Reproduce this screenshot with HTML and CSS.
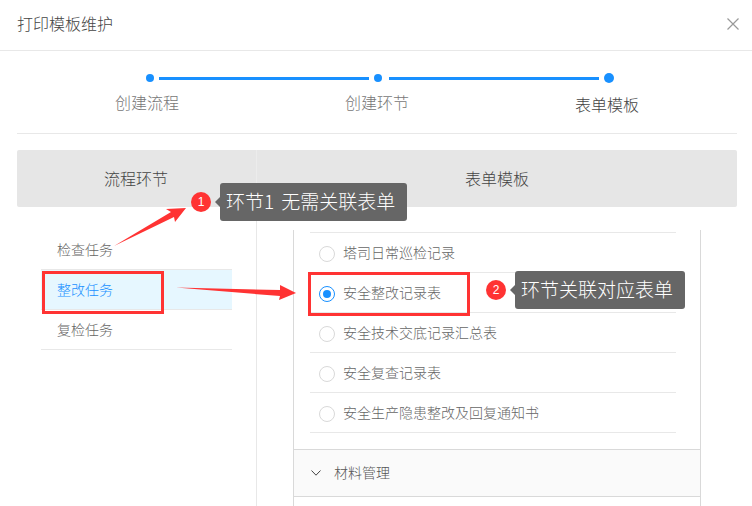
FILE: index.html
```html
<!DOCTYPE html>
<html lang="zh-CN">
<head>
<meta charset="utf-8">
<title>打印模板维护</title>
<link rel="stylesheet" href="styles.css">
</head>
<body>
<div class="dialog">
  <header class="header">
    <span class="title">打印模板维护</span>
    <svg class="close" width="12" height="12" viewBox="0 0 12 12"><path d="M0.5 0.5L11.5 11.5M11.5 0.5L0.5 11.5"/></svg>
  </header>
  <div class="steps">
    <div class="track">
      <i class="dot"></i><i class="line"></i><i class="dot"></i><i class="line"></i><i class="dot dot-big"></i>
    </div>
    <div class="labels">
      <span class="label">创建流程</span>
      <span class="label">创建环节</span>
      <span class="label label-active">表单模板</span>
    </div>
  </div>
  <div class="table">
    <div class="thead">
      <div class="th th-left">流程环节</div>
      <div class="th th-right">表单模板</div>
    </div>
    <div class="tbody">
      <div class="col-left">
        <ul class="flow">
          <li class="flow-item">检查任务</li>
          <li class="flow-item flow-active">整改任务</li>
          <li class="flow-item">复检任务</li>
        </ul>
      </div>
      <div class="col-right">
        <div class="panel">
          <ul class="forms">
            <li class="form"><i class="radio"></i>塔司日常巡检记录</li>
            <li class="form"><i class="radio radio-on"></i>安全整改记录表</li>
            <li class="form"><i class="radio"></i>安全技术交底记录汇总表</li>
            <li class="form"><i class="radio"></i>安全复查记录表</li>
            <li class="form"><i class="radio"></i>安全生产隐患整改及回复通知书</li>
          </ul>
          <div class="group">
            <svg class="chev" width="10" height="6" viewBox="0 0 10 6"><path d="M0.5 0.5L5 5.2L9.5 0.5"/></svg>
            <span>材料管理</span>
          </div>
        </div>
      </div>
    </div>
  </div>
</div>

<svg class="arrows" width="752" height="506" viewBox="0 0 752 506">
  <polygon points="114,246 171,212 166,209 186,208 175,222 174,217"/>
  <polygon points="176,287.5 280,290 280,285 296,293 279,300 280,296"/>
</svg>
<div class="mark mark-a"></div>
<div class="mark mark-b"></div>
<div class="note note-a"><b class="badge">1</b><span class="tip tip-a">环节1 无需关联表单</span></div>
<div class="note note-b"><b class="badge">2</b><span class="tip">环节关联对应表单</span></div>
</body>
</html>
```
FILE: styles.css
```css
* { box-sizing: border-box; }
html, body { margin: 0; padding: 0; }
body {
  width: 752px;
  height: 506px;
  overflow: hidden;
  position: relative;
  background: #fff;
  font-family: "Noto Sans CJK SC", "Liberation Sans", sans-serif;
  font-weight: 300;
  color: #666;
  font-size: 14px;
}
ul { list-style: none; margin: 0; padding: 0; }
i { display: block; }

.dialog { height: 506px; display: flex; flex-direction: column; }

.header {
  height: 51px;
  flex: none;
  display: flex;
  align-items: center;
  justify-content: space-between;
  padding: 0 13px 5px 17px;
  border-bottom: 1px solid #e8e8e8;
}
.title { font-size: 16px; color: #444; line-height: 24px; }
.close { fill: none; stroke: #999; stroke-width: 1.2; margin-top: 3px; }

.steps {
  flex: none;
  height: 83px;
  margin: 0 15px 0 17px;
  border-bottom: 1px solid #e8e8e8;
  padding-top: 22px;
}
.track { display: flex; align-items: center; height: 10px; padding-left: 129px; }
.dot { width: 8px; height: 8px; border-radius: 50%; background: #1890ff; flex: none; }
.dot-big { width: 10px; height: 10px; }
.line { width: 210px; height: 3px; background: #1890ff; margin: 0 5px; flex: none; }
.line:nth-child(4) { margin-left: 7px; }
.labels { display: flex; padding-left: 98px; margin-top: 7px; gap: 166px; }
.label { width: 64px; font-size: 16px; line-height: 24px; color: #777; white-space: nowrap; }
.label-active { color: #444; padding-top: 2px; }

.table { margin: 16px 15px 0 17px; flex: 1; display: flex; flex-direction: column; min-height: 0; }
.thead {
  display: flex;
  height: 57px;
  flex: none;
  background: #e6e6e6;
  border-radius: 2px;
}
.th { font-size: 16px; color: #444; line-height: 56px; text-align: center; }
.th-left { width: 240px; padding-right: 1px; border-right: 1px solid #ececec; }
.th-right { flex: 1; }
.tbody { flex: 1; display: flex; min-height: 0; }
.col-left { width: 240px; flex: none; border-right: 1px solid #e8e8e8; padding: 23px 24px 0 24px; }
.flow-item {
  height: 40px;
  line-height: 39px;
  padding-left: 16px;
  border-bottom: 1px solid #e8e8e8;
  color: #666;
  width: 191px;
}
.flow-active { background: #e6f7ff; color: #1890ff; }

.col-right { flex: 1; padding: 23px 36px 0 36px; min-width: 0; }
.panel {
  height: 100%;
  border-left: 1px solid #d9d9d9;
  border-right: 1px solid #d9d9d9;
  width: 408px;
}
.forms { padding: 2px 24px 16px 16px; }
.form {
  height: 40px;
  display: flex;
  align-items: center;
  border-top: 1px solid #e8e8e8;
  color: #666;
  padding: 0 0 2px 9px;
}
.form:last-child { height: 41px; border-bottom: 1px solid #e8e8e8; }
.radio {
  width: 16px;
  height: 16px;
  border: 1px solid #d9d9d9;
  border-radius: 50%;
  margin: 4px 8px 0 0;
  flex: none;
  background: #fff;
}
.radio-on { border-color: #1890ff; position: relative; }
.radio-on::after {
  content: "";
  position: absolute;
  left: 3px;
  top: 3px;
  width: 8px;
  height: 8px;
  border-radius: 50%;
  background: #1890ff;
}
.group {
  height: 48px;
  display: flex;
  align-items: center;
  background: #fafafa;
  border-top: 1px solid #d9d9d9;
  border-bottom: 1px solid #d9d9d9;
  padding: 0 0 2px 17px;
  color: #555;
}
.chev { fill: none; stroke: #444; stroke-width: 1; margin: 2px 13px 0 0; }

.arrows { position: absolute; left: 0; top: 0; pointer-events: none; }
.arrows polygon { fill: #f33; }
.mark { position: absolute; border: 3px solid #f33; }
.mark-a { left: 42px; top: 271px; width: 122px; height: 43px; }
.mark-b { left: 308px; top: 272px; width: 162px; height: 44px; }

.note { position: absolute; display: flex; align-items: center; }
.note-a { left: 191px; top: 183px; }
.note-b { left: 486px; top: 271px; }
.badge {
  width: 20px;
  height: 20px;
  border-radius: 50%;
  background: #f33;
  color: #fff;
  font: 400 12px/20px "Liberation Sans", sans-serif;
  text-align: center;
  margin-right: 9px;
  flex: none;
}
.tip {
  position: relative;
  display: block;
  height: 38px;
  line-height: 36px;
  padding: 0 12px 0 6px;
  background: #666;
  color: #fff;
  font-size: 19px;
  border-radius: 3px;
  white-space: nowrap;
}
.tip-a { word-spacing: 3px; }
.tip::before {
  content: "";
  position: absolute;
  left: -5px;
  top: 14px;
  border-top: 5px solid transparent;
  border-bottom: 5px solid transparent;
  border-right: 5px solid #666;
}
```
